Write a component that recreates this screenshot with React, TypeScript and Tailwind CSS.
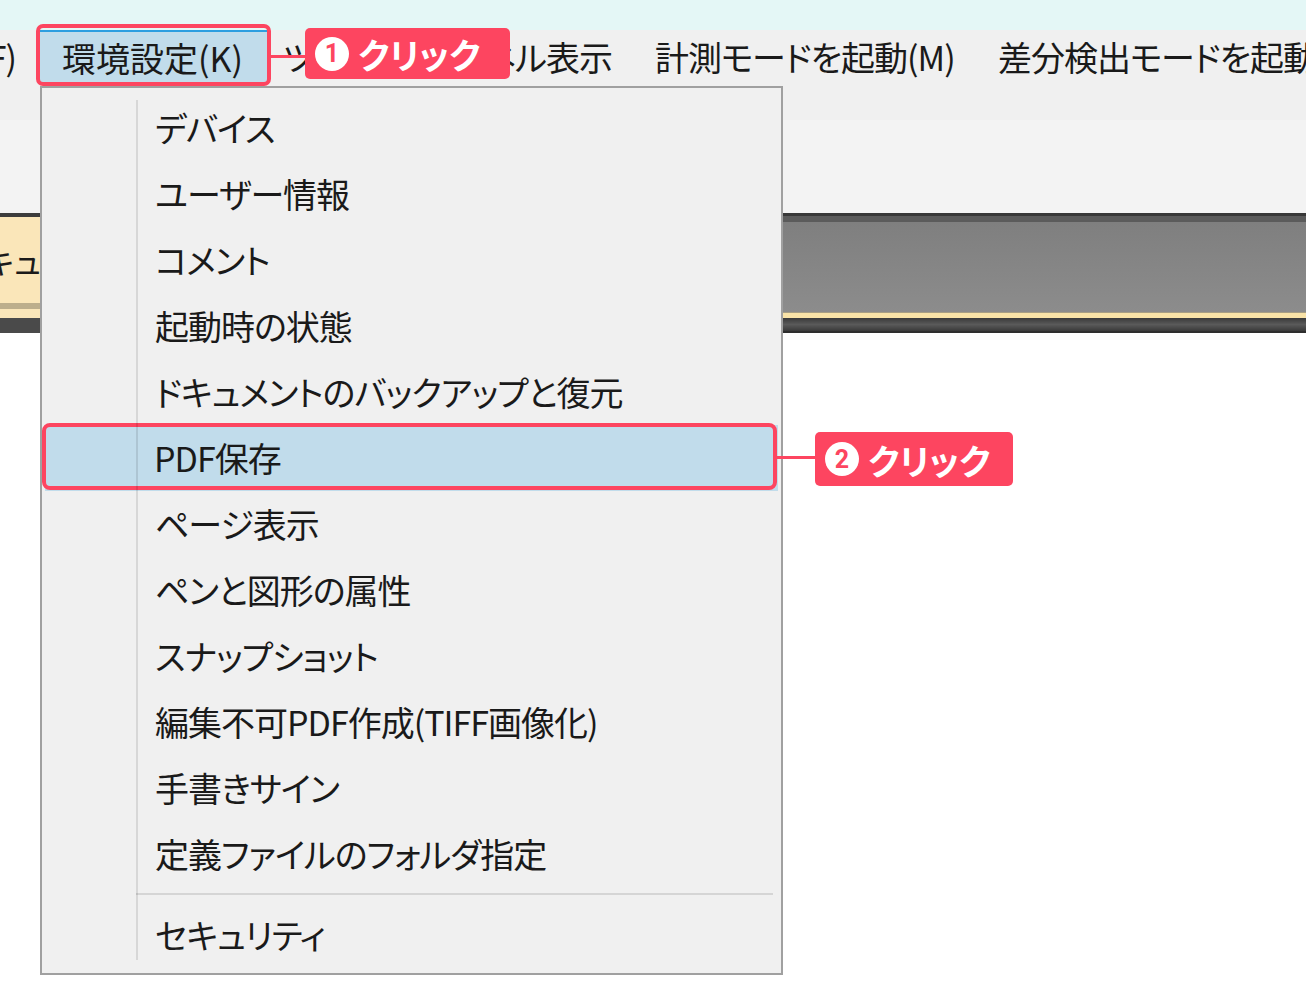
import React from 'react';

const jp = "font-['Meiryo_UI','Noto_Sans_CJK_JP',sans-serif] [font-feature-settings:'palt']";

const items = [
  'デバイス',
  'ユーザー情報',
  'コメント',
  '起動時の状態',
  'ドキュメントのバックアップと復元',
  'PDF保存',
  'ページ表示',
  'ペンと図形の属性',
  'スナップショット',
  '編集不可PDF作成(TIFF画像化)',
  '手書きサイン',
  '定義ファイルのフォルダ指定',
];

function Badge({ n, className }: { n: string; className: string }) {
  return (
    <div className={`absolute flex items-center rounded-[5px] bg-[#fd4560] text-white ${className}`}>
      <span className="flex h-[34px] w-[34px] shrink-0 items-center justify-center rounded-full bg-white text-[25px] font-bold leading-none text-[#fd4560] font-['Roboto',sans-serif]">
        {n}
      </span>
      <span className={`ml-[9px] text-[35px] font-bold leading-none ${jp}`}>クリック</span>
    </div>
  );
}

export default function App() {
  return (
    <div className={`relative h-[997px] w-[1306px] overflow-hidden bg-white text-[#1a1a1a] ${jp}`}>
      {/* title strip */}
      <div className="h-[30px] bg-[#e4f7f6]" />

      {/* menu bar */}
      <div className="h-[90px] bg-[#f0f0f0]">
        <div className="flex h-[53px] whitespace-nowrap text-[34px] leading-none tracking-[-1px]">
          <div className="flex w-[40px] shrink-0 items-center justify-end overflow-hidden pr-[24px]">(F)</div>
          <div className="flex w-[228px] shrink-0 items-center border-t-2 border-[#2d9ee0] bg-[#c1dceb] pl-[22px] tracking-normal">環境設定(K)</div>
          <div className="flex w-[365px] shrink-0 items-center justify-end overflow-hidden pr-[21px]">ツールバー/パネル表示</div>
          <div className="flex w-[344px] shrink-0 items-center pl-[22px]">計測モードを起動(M)</div>
          <div className="flex shrink-0 items-center pl-[21px]">差分検出モードを起動(D)</div>
        </div>
      </div>

      {/* toolbar area */}
      <div className="h-[93px] bg-[#f3f3f3]" />

      {/* document tab band */}
      <div className="flex h-[120px]">
        <div className="flex w-[320px] shrink-0 flex-col">
          <div className="h-[4px] bg-[#3c3c3c]" />
          <div className="flex h-[86px] items-center overflow-hidden bg-[#fae6b9] text-[32px] whitespace-nowrap">
            <span className="ml-[-16px]">キュメント</span>
          </div>
          <div className="h-[6px] bg-[#bcae8c]" />
          <div className="h-[9px] bg-[#fae6b9]" />
          <div className="h-[15px] bg-[#4a4a4a]" />
        </div>
        <div className="flex flex-1 flex-col">
          <div className="h-[3px] bg-[#383838]" />
          <div className="h-[6px] bg-[#5b5b5b]" />
          <div className="h-[90px] bg-gradient-to-b from-[#7f7f7f] to-[#8c8c8c]" />
          <div className="h-[1px] bg-[#a89f85]" />
          <div className="h-[5px] bg-[#f9e3a8]" />
          <div className="h-[13px] bg-gradient-to-b from-[#3a3a3a] via-[#5a5a5a] to-[#3a3a3a]" />
          <div className="h-[2px] bg-[#2e2e2e]" />
        </div>
      </div>

      {/* dropdown */}
      <div className="absolute left-[40px] top-[86px] w-[743px] border-2 border-[#a0a0a0] bg-[#f0f0f0] pb-[5px] pt-[7px]">
        <div className="absolute bottom-[13px] left-[94px] top-[12px] z-10 w-[2px] bg-black/10" />
        {items.map((t, i) => (
          <div
            key={t}
            className={`flex h-[66px] items-center text-[34px] leading-none tracking-[-1px] whitespace-nowrap ${
              i === 5 ? 'mx-[3px] bg-[#c1dceb] pl-[109px]' : 'pl-[113px]'
            }`}
          >
            {t}
          </div>
        ))}
        <div className="ml-[94px] mr-[8px] mt-[6px] h-[2px] bg-[#d5d5d5]" />
        <div className="mt-[7px] flex h-[66px] items-center pl-[113px] text-[34px] leading-none tracking-[-1px]">セキュリティ</div>
      </div>

      {/* annotations */}
      <div className="absolute left-[36px] top-[24px] h-[62px] w-[235px] rounded-[7px] border-4 border-[#fd4560]" />
      <div className="absolute left-[271px] top-[55px] h-[3px] w-[34px] bg-[#fd4560]" />
      <Badge n="1" className="left-[305px] top-[28px] h-[51px] w-[205px] pl-[10px]" />

      <div className="absolute left-[42px] top-[423px] h-[67px] w-[735px] rounded-[8px] border-4 border-[#fd4560]" />
      <div className="absolute left-[777px] top-[456px] h-[3px] w-[38px] bg-[#fd4560]" />
      <Badge n="2" className="left-[815px] top-[432px] h-[54px] w-[198px] pl-[10px]" />
    </div>
  );
}
